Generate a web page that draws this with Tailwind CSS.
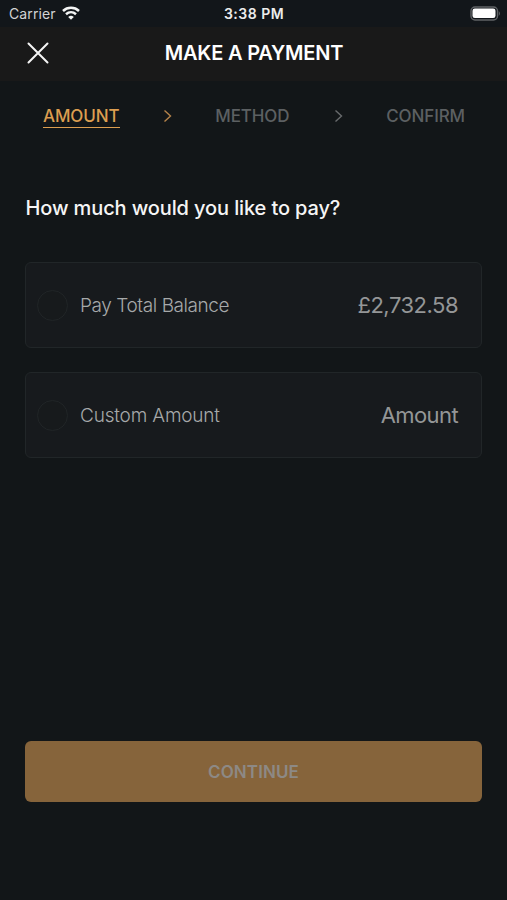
<!DOCTYPE html>
<html lang="en">
<head>
<meta charset="utf-8">
<meta name="viewport" content="width=device-width, initial-scale=1">
<title>Make a Payment</title>
<script src="https://cdn.jsdelivr.net/npm/@tailwindcss/browser@4"></script>
</head>
<body class="bg-[#121618] font-['Inter',sans-serif]">
<main class="flex h-[900px] w-[507px] flex-col overflow-hidden whitespace-nowrap">
  <div class="grid h-[27px] shrink-0 grid-cols-3 items-center bg-[#12161a] pl-[8px] pr-[7px]">
    <div class="flex items-center gap-[6px] pl-px text-[14px] leading-[27px] text-[#d2d3d4]">
      <span class="tracking-[0.1px]">Carrier</span>
      <svg class="-mt-[2px] h-[14px] w-[18px]" viewBox="0 0 18 14" fill="none" stroke="#f4f5f5" stroke-width="2.5">
        <path d="M1 5C5.5.8 12.500.8 17 5"/>
        <path d="M4 8.200C7 5.500 11 5.500 14 8.200"/>
        <path d="M9 13.700L6.200 10.900Q9 8.600 11.800 10.900Z" fill="#f4f5f5" stroke="none"/>
      </svg>
    </div>
    <span class="text-center text-[14px] font-semibold leading-[27px] tracking-[0.500px] text-[#ececec]">3:38 PM</span>
    <svg class="-mr-px h-[15px] w-[31px] justify-self-end" viewBox="0 0 31 15" fill="none">
      <rect x="1" y="1" width="26.500" height="13" rx="4" stroke="#606366" stroke-width="1.400"/>
      <rect x="2.500" y="2.500" width="23" height="9.500" rx="2.300" fill="#fff"/>
      <path d="M28.800 5Q31 7.500 28.800 10Z" fill="#606366"/>
    </svg>
  </div>
  <header class="flex h-[54px] shrink-0 items-center bg-[#191919] px-[27px] pb-[3px]">
    <svg class="h-[22px] w-[22px]" viewBox="0 0 22 22" fill="none" stroke="#f5f5f5" stroke-width="2" stroke-linecap="round"><path d="M1.500 1.500l19 19M20.500 1.500l-19 19"/></svg>
    <h1 class="flex-1 pr-[21px] text-center text-[20px] font-semibold leading-[24px] tracking-[-0.200px] text-white">MAKE A PAYMENT</h1>
  </header>
  <nav class="flex h-[70px] shrink-0 items-center justify-between pl-[43px] pr-[42px] text-[17px] font-medium text-[#5c6062]">
    <span class="mt-px border-b-[1.500px] border-[#dc9e50] leading-[22px] tracking-[-0.100px] text-[#dc9e50]">AMOUNT</span>
    <svg class="h-[14px] w-[9px]" viewBox="0 0 9 14" fill="none" stroke="#b5834a" stroke-width="1.400"><path d="M1.500 1.500L7.500 7l-6 5.500"/></svg>
    <span class="mt-px tracking-[-0.100px]">METHOD</span>
    <svg class="ml-px h-[14px] w-[9px]" viewBox="0 0 9 14" fill="none" stroke="#686b6d" stroke-width="1.400"><path d="M1.500 1.500L7.500 7l-6 5.500"/></svg>
    <span class="mt-px tracking-[-0.100px]">CONFIRM</span>
  </nav>
  <section class="flex flex-1 flex-col px-[25px] pt-[44px]">
    <h2 class="pl-[0.500px] text-[20px] font-medium leading-[26px] tracking-[-0.120px] text-[#f5f5f5]">How much would you like to pay?</h2>
    <div class="mt-[41px] flex flex-col gap-[24px]">
      <div class="flex h-[86px] items-center rounded-[6px] border-[1.500px] border-[#212628] bg-[#171a1d] pl-[11px] pr-[23px]">
        <i class="h-[31px] w-[31px] rounded-full border border-[#212527] bg-[#171a1c]"></i>
        <span class="ml-[12px] mt-[2px] flex-1 text-[19px] font-light tracking-[-0.420px] text-[#a6a9aa]">Pay Total Balance</span>
        <span class="text-[22px] tracking-[-0.500px] text-[#949697]">£2,732.58</span>
      </div>
      <div class="flex h-[86px] items-center rounded-[6px] border-[1.500px] border-[#212628] bg-[#171a1d] pl-[11px] pr-[23px]">
        <i class="h-[31px] w-[31px] rounded-full border border-[#212527] bg-[#171a1c]"></i>
        <span class="ml-[12px] mt-[2px] flex-1 text-[19px] font-light tracking-[-0.180px] text-[#a6a9aa]">Custom Amount</span>
        <span class="text-[22px] tracking-[-0.600px] text-[#949697]">Amount</span>
      </div>
    </div>
    <button class="mb-[98px] mt-auto h-[61px] rounded-[6px] bg-[#86643b] pt-[2px] text-[17px] font-semibold tracking-[0.100px] text-[#8d8985]">CONTINUE</button>
  </section>
</main>
</body>
</html>
